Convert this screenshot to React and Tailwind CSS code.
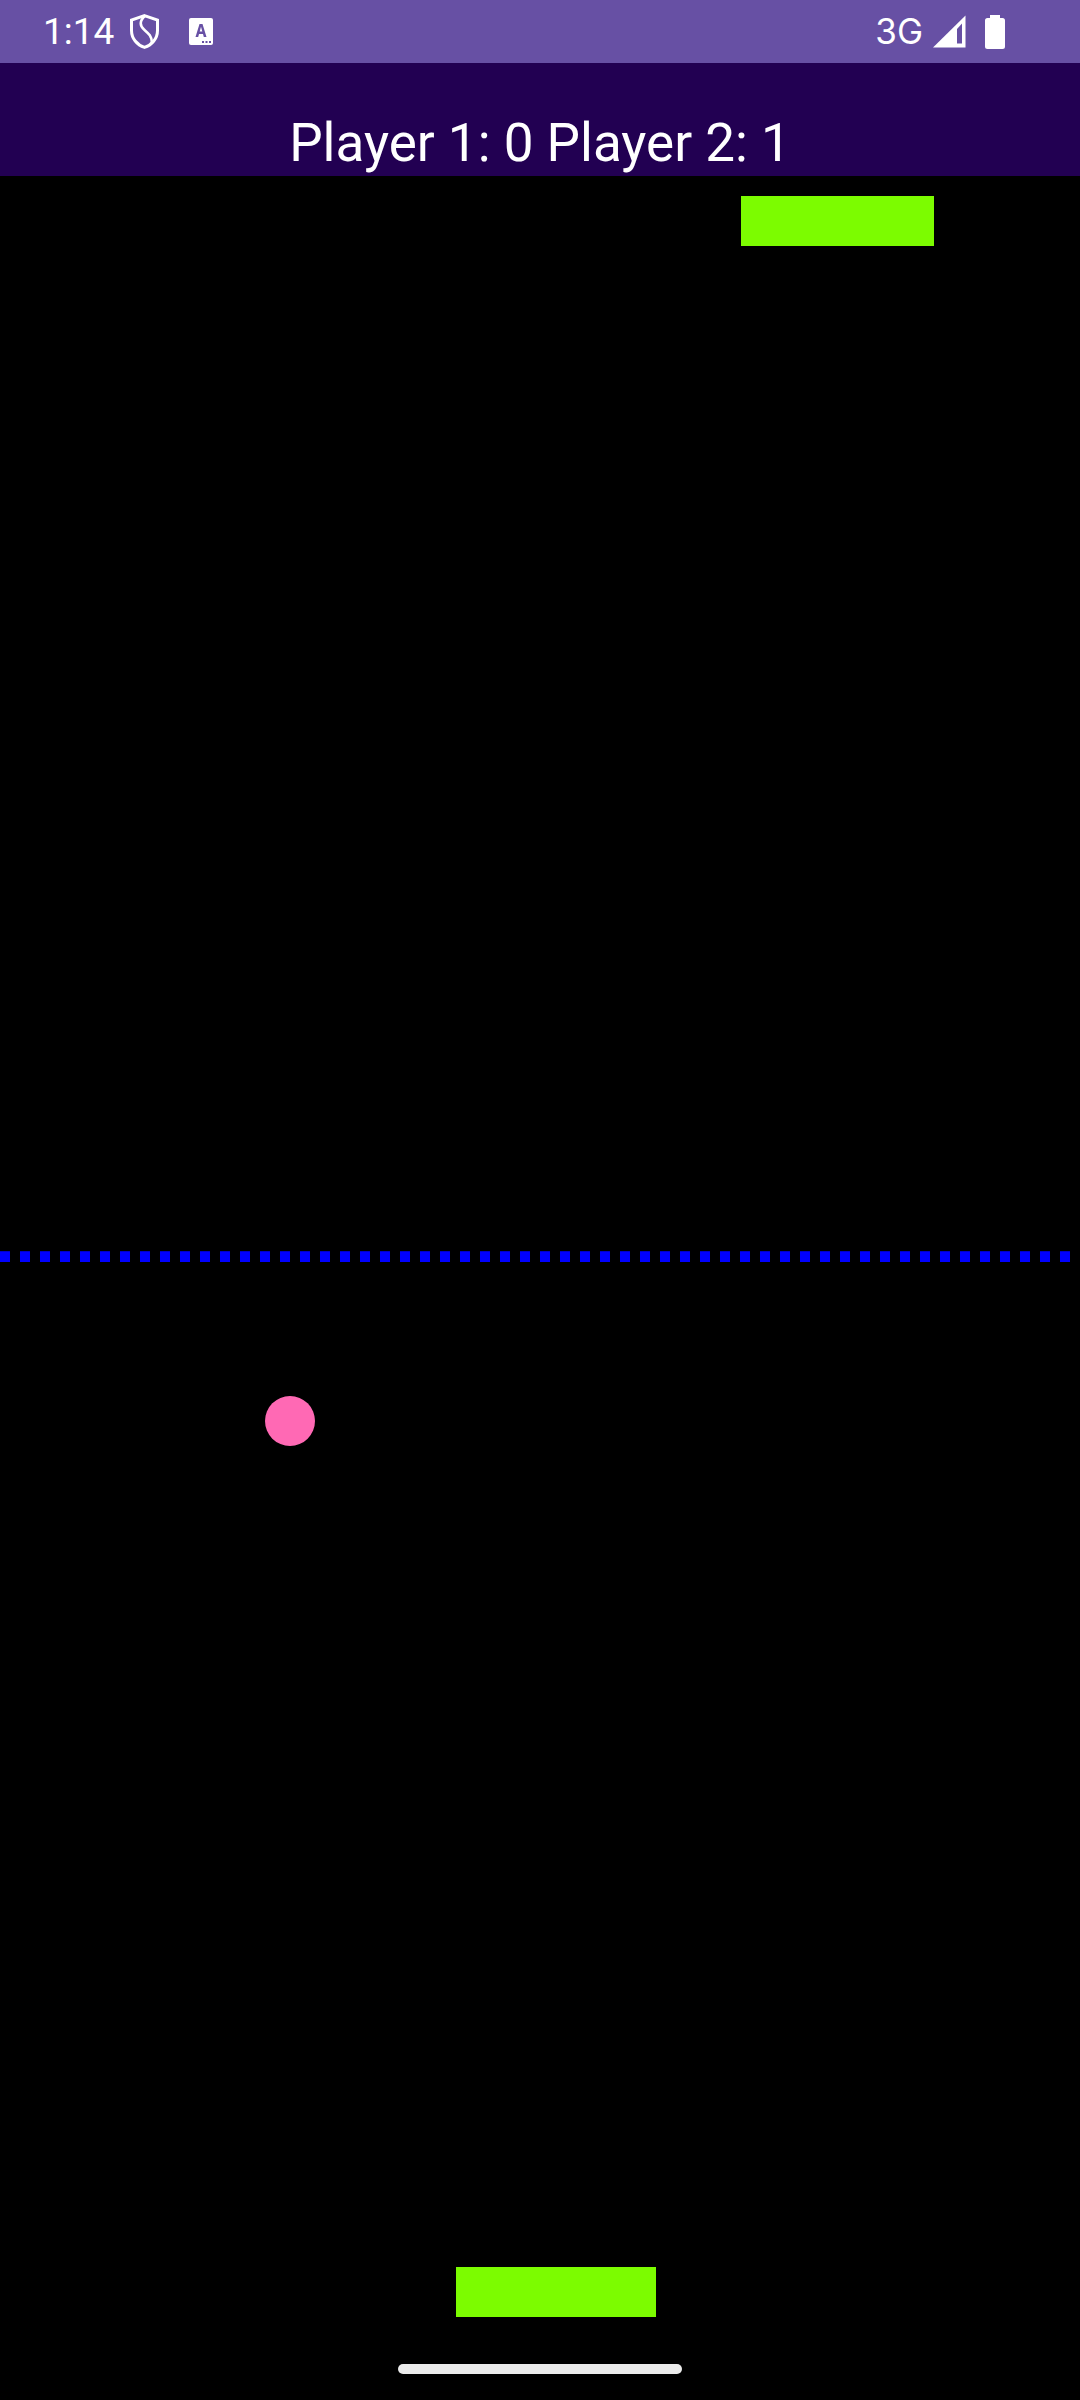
const dots = Array.from({ length: 54 }, (_, i) => i);

function Shield() {
  return (
    <svg width="29" height="35" viewBox="0 0 29 35" className="ml-[16px]" fill="none" stroke="#fff" strokeWidth="3">
      <path d="M14.5 1.6 L27.5 6 V16.5 C27.5 24.5 22 31 14.5 33.4 C7 31 1.5 24.5 1.5 16.5 V6 Z" />
      <path d="M15 2 C9 7 10 12 14 15.5 C18 19 22 22 22 29" strokeWidth="2.6" />
    </svg>
  );
}

function KeyboardA() {
  return (
    <svg width="24" height="27" viewBox="0 0 24 27" className="ml-[30px]">
      <rect x="0" y="0" width="24" height="27" rx="2" fill="#fff" />
      <path d="M6.5 19 L10.5 6 H13.5 L17.5 19 H14.8 L14 16 H10 L9.2 19 Z M10.7 13.6 H13.3 L12 8.8 Z" fill="#6750a4" fillRule="evenodd" />
      <rect x="13" y="23" width="2" height="2" fill="#6750a4" />
      <rect x="16.5" y="23" width="2" height="2" fill="#6750a4" />
      <rect x="20" y="23" width="2" height="2" fill="#6750a4" />
    </svg>
  );
}

function Signal() {
  return (
    <svg width="33" height="33" viewBox="0 0 33 33" className="ml-[10px]">
      <path d="M32.5 0.5 V32.5 H0 Z" fill="#fff" />
      <path d="M24 14 L29 8.5 V28.5 H24 Z" fill="#6750a4" />
    </svg>
  );
}

function Battery() {
  return (
    <svg width="20" height="34" viewBox="0 0 20 34" className="ml-[19px]">
      <path d="M5 0 H15 V3 H17.5 A2.5 2.5 0 0 1 20 5.5 V31.5 A2.5 2.5 0 0 1 17.5 34 H2.5 A2.5 2.5 0 0 1 0 31.5 V5.5 A2.5 2.5 0 0 1 2.5 3 H5 Z" fill="#fff" />
    </svg>
  );
}

export default function App() {
  return (
    <div className="relative flex h-[2400px] w-[1080px] flex-col overflow-hidden bg-black font-['Roboto',sans-serif] text-white">
      <div className="flex h-[63px] shrink-0 items-center bg-[#6750a4] pl-[43px] pr-[75px]">
        <span className="w-[71px] text-[37px] leading-none">1:14</span>
        <Shield />
        <KeyboardA />
        <span className="ml-auto font-['Inter',sans-serif] text-[35px] leading-none">3G</span>
        <Signal />
        <Battery />
      </div>
      <div className="flex h-[113px] shrink-0 items-end justify-center bg-[#220052]">
        <span className="text-[53px] leading-[66px]">Player 1: 0 Player 2: 1</span>
      </div>
      <div className="relative flex-1">
        <div className="absolute left-[741px] top-[20px] h-[50px] w-[193px] bg-[#7cfc00]" />
        <div className="absolute left-0 top-[1075px] flex gap-[10px]">
          {dots.map((i) => (
            <div key={i} className="h-[11px] w-[10px] shrink-0 border-t border-[#0000c8] bg-[#0000ff]" />
          ))}
        </div>
        <div className="absolute left-[265px] top-[1220px] h-[50px] w-[50px] rounded-full bg-[#ff69b4]" />
        <div className="absolute left-[456px] top-[2091px] h-[50px] w-[200px] bg-[#7cfc00]" />
        <div className="absolute left-[398px] top-[2188px] h-[10px] w-[284px] rounded-full bg-[#ebebeb]" />
      </div>
    </div>
  );
}
